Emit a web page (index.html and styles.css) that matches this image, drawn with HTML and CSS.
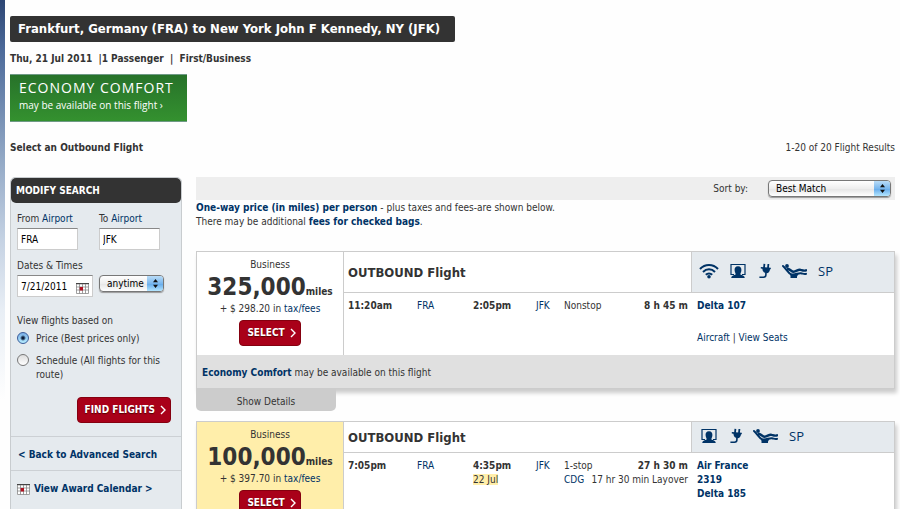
FILE: index.html
```html
<!DOCTYPE html>
<html lang="en">
<head>
    <meta charset="UTF-8">
    <meta name="viewport" content="width=device-width, initial-scale=1.0">
    <title>Flight Results</title>
    <link rel="stylesheet" href="styles.css">
</head>
<body>
    <svg class="defs" aria-hidden="true">
        <symbol id="wifi" viewBox="0 0 20 16">
            <g fill="none" stroke="currentColor" stroke-width="2">
                <path d="M1 6 C6 .6 14 .6 19 6"/>
                <path d="M4 9 C7.500 5.300 12.500 5.300 16 9"/>
                <path d="M6.800 11.800 C8.700 9.900 11.300 9.900 13.200 11.800"/>
            </g>
            <circle cx="10" cy="13.800" r="1.800" fill="currentColor"/>
        </symbol>
        <symbol id="screen" viewBox="0 0 16 16">
            <path d="M4 11.500 H1 V1.500 H15 V11.500 H12" fill="none" stroke="currentColor" stroke-width="1.200"/>
            <path d="M8 3.200 C10.600 3.200 11.600 5 11.400 7.200 C11.300 8.500 11 9.500 10.500 10.200 V11.800 C12.500 12.200 14.500 12.800 14.800 15 H1.200 C1.500 12.800 3.500 12.200 5.500 11.800 V10.200 C5 9.500 4.700 8.500 4.600 7.200 C4.400 5 5.400 3.200 8 3.200 Z" fill="currentColor"/>
        </symbol>
        <symbol id="plug" viewBox="0 0 12 16">
            <path d="M1.800 4 L11.800 4.800 V6.200 H11 C10.800 8.600 9.700 10 7.600 10.200 C5 10.200 3.600 8.600 3.400 5.800 L1.800 5.400 Z" fill="currentColor"/>
            <path d="M5 5 L5.400 .8 M9 5 L9.400 1" stroke="currentColor" stroke-width="1.800"/>
            <path d="M6.900 9.500 V11.800 C6.900 13.600 6 14.200 4.400 14.200 H.4" fill="none" stroke="currentColor" stroke-width="1.600"/>
        </symbol>
        <symbol id="seat" viewBox="0 0 25 16">
            <circle cx="5" cy="3" r="1.900" fill="currentColor"/>
            <g fill="none" stroke="currentColor" stroke-linecap="round">
                <path d="M1 3 C4 5.500 6 10 9 11.300 C13 12.600 16 9.600 19 10.200 C21 10.600 22.500 11.600 24 10.800" stroke-width="2"/>
                <path d="M6 6 C8.500 6.400 9.500 8.800 11.500 8.800 C14.500 8.400 16 6.200 18.500 6.800 C20.500 7.400 22 8.200 24 7.300" stroke-width="2.400"/>
            </g>
            <path d="M8 11 H16.500 L15 13.400 V15 H8.500 V13 Z" fill="currentColor"/>
        </symbol>
        <symbol id="calendar" viewBox="0 0 13 11">
            <path d="M0 1 H13 V11 H0 Z" fill="#fff"/>
            <path d="M0 .5 H13" stroke="#444" stroke-width="1.500"/>
            <path d="M.5 1 V10.500 H12.500 V1 M0 4 H13 M0 7 H13 M3.500 1 V10.500 M6.500 1 V10.500 M9.500 1 V10.500" fill="none" stroke="#888" stroke-width=".8"/>
            <path d="M3.700 4 H7 V7.500 H3.700 Z" fill="#b01020"/>
        </symbol>
        <symbol id="chevron" viewBox="0 0 6 10">
            <path d="M1 1 L5 5 L1 9" fill="none" stroke="currentColor" stroke-width="1.400"/>
        </symbol>
    </svg>

    <header>
        <h1>Frankfurt, Germany (FRA) to New York John F Kennedy, NY (JFK)</h1>
        <p class="trip">Thu, 21 Jul 2011&nbsp; |1 Passenger&nbsp; | &nbsp;First/Business</p>
        <a class="banner" href="#">
            <span class="banner-title">ECONOMY COMFORT</span>
            <span class="banner-text">may be available on this flight ›</span>
        </a>
        <div class="heading-row">
            <h2>Select an Outbound Flight</h2>
            <span>1-20 of 20 Flight Results</span>
        </div>
    </header>

    <div class="columns">
        <aside class="sidebar">
            <h2>MODIFY SEARCH</h2>
            <form class="search">
                <div class="pair">
                    <div class="field">
                        <label for="from">From <a href="#">Airport</a></label>
                        <input type="text" id="from" value="FRA">
                    </div>
                    <div class="field">
                        <label for="to">To <a href="#">Airport</a></label>
                        <input type="text" id="to" value="JFK">
                    </div>
                </div>
                <label class="dates-label" for="date">Dates &amp; Times</label>
                <div class="dates">
                    <div class="date-box">
                        <input type="text" id="date" value="7/21/2011">
                        <svg class="calendar"><use href="#calendar"/></svg>
                    </div>
                    <div class="select time-select">
                        <select aria-label="Time"><option>anytime</option></select>
                    </div>
                </div>
                <fieldset>
                    <legend>View flights based on</legend>
                    <div class="option">
                        <input type="radio" name="view" id="price" checked>
                        <label for="price">Price (Best prices only)</label>
                    </div>
                    <div class="option">
                        <input type="radio" name="view" id="schedule">
                        <label for="schedule">Schedule (All flights for this route)</label>
                    </div>
                </fieldset>
                <button class="btn" type="button">FIND FLIGHTS <svg class="chevron"><use href="#chevron"/></svg></button>
            </form>
            <a class="side-link" href="#">&lt; Back to Advanced Search</a>
            <a class="side-link" href="#"><svg class="calendar"><use href="#calendar"/></svg>View Award Calendar &gt;</a>
        </aside>

        <main>
            <div class="sort">
                <label for="sort">Sort by:</label>
                <div class="select sort-select">
                    <select id="sort"><option>Best Match</option></select>
                </div>
            </div>
            <p class="note"><a href="#">One-way price (in miles) per person</a> - plus taxes and fees-are shown below.<br>There may be additional <a href="#">fees for checked bags</a>.</p>

            <section class="result">
                <div class="card">
                    <div class="card-main">
                        <div class="fare">
                            <div>Business</div>
                            <div class="miles"><strong>325,000</strong><b>miles</b></div>
                            <div class="tax">+ $ 298.20 in <a href="#">tax/fees</a></div>
                            <button class="btn" type="button">SELECT <svg class="chevron"><use href="#chevron"/></svg></button>
                        </div>
                        <div class="flight">
                            <div class="flight-head">
                                <h3>OUTBOUND Flight</h3>
                                <div class="amenities">
                                    <svg class="wifi"><use href="#wifi"/></svg>
                                    <svg class="screen"><use href="#screen"/></svg>
                                    <svg class="plug"><use href="#plug"/></svg>
                                    <svg class="seat"><use href="#seat"/></svg>
                                    <span>SP</span>
                                </div>
                            </div>
                            <div class="flight-body">
                                <table>
                                    <tr>
                                        <td class="depart"><b>11:20am</b></td>
                                        <td class="origin"><a href="#">FRA</a></td>
                                        <td class="arrive"><b>2:05pm</b></td>
                                        <td class="dest"><a href="#">JFK</a></td>
                                        <td>Nonstop</td>
                                        <td class="duration"><b>8 h 45 m</b></td>
                                    </tr>
                                </table>
                                <div class="carrier">
                                    <a class="number" href="#">Delta 107</a>
                                    <div class="plane"><a href="#">Aircraft</a> | <a href="#">View Seats</a></div>
                                </div>
                            </div>
                        </div>
                    </div>
                    <div class="comfort"><a href="#">Economy Comfort</a> may be available on this flight</div>
                </div>
                <button class="details" type="button">Show Details</button>
            </section>

            <section class="result">
                <div class="card">
                    <div class="card-main">
                        <div class="fare best">
                            <div>Business</div>
                            <div class="miles"><strong>100,000</strong><b>miles</b></div>
                            <div class="tax">+ $ 397.70 in <a href="#">tax/fees</a></div>
                            <button class="btn" type="button">SELECT <svg class="chevron"><use href="#chevron"/></svg></button>
                        </div>
                        <div class="flight">
                            <div class="flight-head compact">
                                <h3>OUTBOUND Flight</h3>
                                <div class="amenities">
                                    <svg class="screen"><use href="#screen"/></svg>
                                    <svg class="plug"><use href="#plug"/></svg>
                                    <svg class="seat"><use href="#seat"/></svg>
                                    <span>SP</span>
                                </div>
                            </div>
                            <div class="flight-body">
                                <table>
                                    <tr>
                                        <td class="depart"><b>7:05pm</b></td>
                                        <td class="origin"><a href="#">FRA</a></td>
                                        <td class="arrive"><b>4:35pm</b></td>
                                        <td class="dest"><a href="#">JFK</a></td>
                                        <td>1-stop</td>
                                        <td class="duration"><b>27 h 30 m</b></td>
                                    </tr>
                                    <tr>
                                        <td></td>
                                        <td></td>
                                        <td><mark>22 Jul</mark></td>
                                        <td></td>
                                        <td colspan="2"><div class="layover"><a href="#">CDG</a><span>17 hr 30 min Layover</span></div></td>
                                    </tr>
                                </table>
                                <div class="carrier">
                                    <a class="number" href="#">Air France<br>2319<br>Delta 185</a>
                                </div>
                            </div>
                        </div>
                    </div>
                </div>
            </section>
        </main>
    </div>
</body>
</html>
```
FILE: styles.css
```css
* {
    box-sizing: border-box;
}
body {
    margin: 0;
    padding: 16px 5px 0 10px;
    font-family: "DejaVu Sans Condensed", "DejaVu Sans", sans-serif;
    font-size: 10px;
    line-height: 14px;
    color: #333;
    background: linear-gradient(#2d4674, #4c6a9a 50px, #93a9c6 160px, #c5d2e3 240px, #e8eef5 310px, #fefefe 400px) 0 0 / 5px 100% no-repeat #fefefe;
}
h1, h2, h3, p {
    margin: 0;
}
a {
    color: #003366;
    text-decoration: none;
}
input, select, button {
    font: inherit;
    color: #000;
}
.defs {
    display: none;
}

/* page heading */
h1 {
    width: fit-content;
    padding: 4px 15px 4px 8px;
    border-radius: 2px;
    background: #333;
    color: #fff;
    font-size: 13px;
    line-height: 18px;
}
.trip {
    margin-top: 10px;
    font-weight: bold;
}
.banner {
    display: block;
    width: fit-content;
    margin-top: 8px;
    padding: 4px 13px 8px 9px;
    border: 1px solid #6f9a86;
    border-width: 1px 0;
    background: linear-gradient(#27722a, #34912f);
    color: #fff;
    font-family: "Open Sans", sans-serif;
}
.banner span {
    display: block;
}
.banner-title {
    font-size: 14px;
    line-height: 18px;
    letter-spacing: 1px;
}
.banner-text {
    font-size: 10px;
    line-height: 16px;
}
.heading-row {
    display: flex;
    justify-content: space-between;
    margin: 19px 0 22px;
}
.heading-row h2 {
    font-size: 10px;
}
.columns {
    display: flex;
    align-items: flex-start;
    gap: 14px;
}

/* search form */
.sidebar {
    width: 172px;
    flex: none;
    padding-bottom: 14px;
    border: 1px solid #c8cccf;
    border-radius: 5px 5px 0 0;
    background: #e5eaee;
}
.sidebar h2 {
    padding: 6px 5px 5px;
    border-radius: 5px;
    background: #333;
    color: #fff;
    font-size: 10px;
}
.search {
    padding: 9px 10px 13px 6px;
    border-bottom: 1px solid #ccd0d4;
}
.pair {
    display: flex;
    gap: 21px;
}
.field label, .dates-label {
    display: block;
}
.search input[type="text"] {
    display: block;
    width: 61px;
    height: 22px;
    padding: 0 3px;
    border: 1px solid #ccc;
    border-top-color: #888;
    background: #fff;
}
.field input {
    margin-top: 2px;
}
.dates-label {
    margin-top: 9px;
}
.dates {
    display: flex;
    gap: 6px;
    margin-top: 2px;
}
.date-box {
    position: relative;
}
.date-box input[type="text"] {
    width: 76px;
}
.calendar {
    width: 13px;
    height: 11px;
}
.date-box .calendar {
    position: absolute;
    right: 4px;
    bottom: 3px;
}
.select {
    position: relative;
    height: 17px;
    border: 1px solid #777;
    border-radius: 4px;
    background: linear-gradient(#fff, #eee 50%, #e4e4e4 51%, #fff);
    box-shadow: 0 1px 1px #999;
    overflow: hidden;
}
.select select {
    display: block;
    width: 100%;
    height: 15px;
    padding: 0 7px;
    border: 0;
    appearance: none;
    background: transparent;
}
/* blue stepper with the two arrows */
.select::before {
    content: "";
    position: absolute;
    top: 0;
    right: 0;
    width: 16px;
    height: 100%;
    background: linear-gradient(#b9dcf7, #79b7ee 50%, #62a8ea 51%, #b4e6ff);
    pointer-events: none;
}
.select::after {
    content: "";
    position: absolute;
    top: 3px;
    right: 5px;
    width: 5px;
    height: 9px;
    background: #111;
    clip-path: polygon(50% 0, 100% 35%, 0 35%, 0 65%, 100% 65%, 50% 100%, 0 65%, 0 35%);
    pointer-events: none;
}
.time-select {
    width: 65px;
}
fieldset {
    margin: 17px 0 0;
    padding: 0;
    border: 0;
}
legend {
    padding: 0;
}
.option {
    display: flex;
    align-items: flex-start;
    gap: 7px;
    margin-top: 4px;
}
.option + .option {
    margin-top: 8px;
}
.option input {
    flex: none;
    width: 12px;
    height: 12px;
    margin: 0;
    border: 1px solid #777;
    border-radius: 50%;
    appearance: none;
    background: linear-gradient(#ddd, #fff);
}
.option input:checked {
    border-color: #3a5c9a;
    background: radial-gradient(circle, #0b1c3a 0 1px, transparent 3px), linear-gradient(#78aee6, #b5ecff);
}
.btn {
    display: flex;
    align-items: center;
    gap: 5px;
    height: 26px;
    padding: 0 4px 0 7px;
    border: 1px solid #85000f;
    border-radius: 4px;
    background: #a90019;
    color: #fff;
    font-weight: bold;
    text-shadow: 0 1px 1px #500;
}
.search .btn {
    margin: 15px 0 0 auto;
}
.chevron {
    width: 6px;
    height: 10px;
}
.side-link {
    display: flex;
    align-items: center;
    gap: 4px;
    padding: 11px 7px 8px;
    font-weight: bold;
}
.side-link + .side-link {
    padding-left: 6px;
    border-top: 1px solid #ccd0d4;
}

/* results */
main {
    flex: 1;
    min-width: 0;
}
.sort {
    display: flex;
    justify-content: flex-end;
    align-items: center;
    gap: 20px;
    height: 23px;
    padding-right: 4px;
    background: #eee;
}
.sort-select {
    width: 123px;
}
.note {
    margin: 1px 0 22px;
}
.note a, .comfort a {
    font-weight: bold;
}
.result {
    margin-bottom: 10px;
}
.card {
    border: 1px solid #ccc;
    box-shadow: 2px 4px 4px #ccc;
    background: #fff;
}
.card-main {
    display: flex;
}
.fare {
    display: flex;
    flex-direction: column;
    align-items: center;
    width: 147px;
    padding: 6px 0 9px;
    border-right: 1px solid #ccc;
}
.best {
    background: #ffeeaa;
}
.miles {
    display: flex;
    align-items: baseline;
    line-height: 14px;
}
.miles strong {
    font-size: 24px;
    line-height: 30px;
}
.tax {
    margin-bottom: 4px;
}
.flight {
    flex: 1;
    display: flex;
    flex-direction: column;
}
.flight-head {
    display: flex;
    height: 41px;
    border-bottom: 1px solid #ccc;
}
.flight-head.compact {
    height: 31px;
}
.flight-head h3 {
    flex: 1;
    align-self: center;
    padding: 2px 0 0 4px;
    font-size: 13px;
}
.amenities {
    display: flex;
    align-items: center;
    gap: 11px;
    width: 203px;
    padding: 0 0 3px 7px;
    border-left: 1px solid #ccc;
    background: #e5eaee;
    color: #003366;
    font-family: "Open Sans", sans-serif;
    font-size: 13px;
}
.compact .amenities {
    padding-left: 9px;
}
.wifi {
    width: 20px;
    height: 16px;
}
.screen {
    width: 16px;
    height: 16px;
}
.plug {
    width: 12px;
    height: 16px;
    margin-left: 2px;
}
.seat {
    width: 25px;
    height: 16px;
}
.flight-body {
    display: flex;
    padding: 6px 0;
}
table {
    flex: 1;
    align-self: flex-start;
    margin-left: 4px;
    border-collapse: collapse;
    table-layout: fixed;
    width: 100%;
}
td {
    padding: 0;
    white-space: nowrap;
}
.depart {
    width: 69px;
}
.origin {
    width: 56px;
}
.arrive {
    width: 63px;
}
.dest {
    width: 28px;
}
.duration {
    text-align: right;
}
.layover {
    display: flex;
    justify-content: space-between;
}
mark {
    background: #ffeeaa;
    color: inherit;
}
.carrier {
    flex: none;
    width: 197px;
    margin-left: 9px;
}
.number {
    font-weight: bold;
}
.plane {
    margin-top: 18px;
}
.comfort {
    padding: 11px 5px 8px;
    background: #e0e0e0;
}
.details {
    position: relative;
    display: block;
    width: 140px;
    height: 22px;
    padding: 3px 0 0;
    border: 0;
    border-radius: 0 0 5px 5px;
    background: #ccc;
    color: #333;
}
```
